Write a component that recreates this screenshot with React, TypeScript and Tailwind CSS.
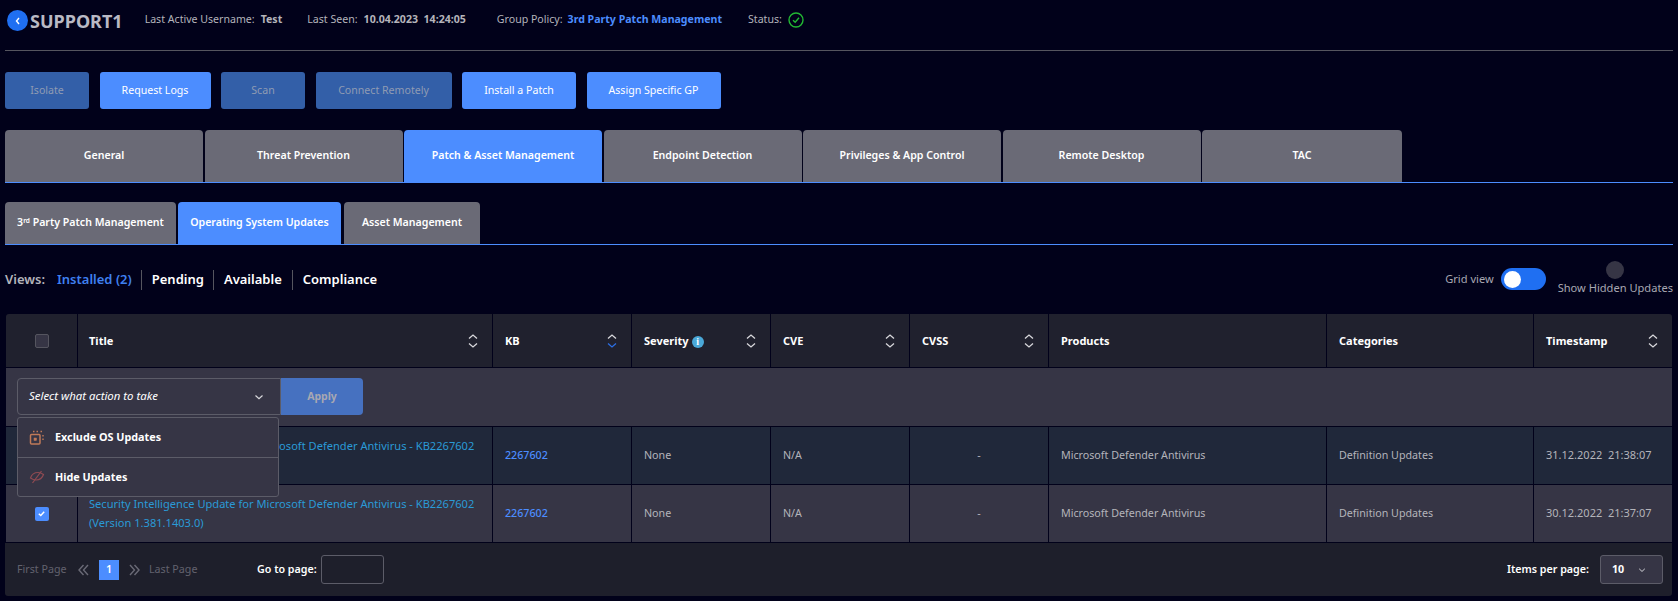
import React from "react";

const tabBase = "flex items-center justify-center rounded-t-[4px] text-white font-semibold";

function Sort({ active = false }: { active?: boolean }) {
  return (
    <svg width="12" height="16" viewBox="0 0 12 16" fill="none" strokeWidth="1.3" className="shrink-0">
      <path d="M2 5.500 6 2l4 3.500" stroke="#d8d8dc" />
      <path d="M2 10.500 6 14l4-3.500" stroke={active ? "#2b6fe6" : "#d8d8dc"} />
    </svg>
  );
}

function Chevron({ size = 10 }: { size?: number }) {
  return (
    <svg width={size} height={size} viewBox="0 0 10 10" fill="none" stroke="#d8d8dc" strokeWidth="1.2">
      <path d="M1.500 3.500 5 6.800l3.500-3.300" />
    </svg>
  );
}

function Head({ label, sort, active, info, title }: { label: string; sort?: boolean; active?: boolean; info?: boolean; title?: boolean }) {
  return (
    <div className={`flex items-center justify-between border-l border-[#01011a] pr-[13px] ${title ? "pl-[11px]" : "pl-[12px]"}`}>
      <span className="flex items-center gap-[3px] pt-[2px] text-[11px] font-bold text-white">
        {label}
        {info && (
          <span className="flex h-[12px] w-[12px] items-center justify-center rounded-full bg-[#4aa8d8] font-['Liberation_Serif',serif] text-[10px] font-bold leading-none text-white">i</span>
        )}
      </span>
      {sort && <Sort active={active} />}
    </div>
  );
}

function Cell({ children, center, title, className = "" }: { children?: React.ReactNode; center?: boolean; title?: boolean; className?: string }) {
  return (
    <div className={`flex items-center border-l border-[#01011a] pr-[12px] text-[10.7px] text-[#b4b4ba] ${title ? "pl-[11px]" : "pl-[12px]"} ${center ? "justify-center" : ""} ${className}`}>
      {children}
    </div>
  );
}

function Row({ date, bg, checked }: { date: string; bg: string; checked?: boolean }) {
  return (
    <div className={`grid h-full grid-cols-[71px_415px_139px_139px_139px_139px_278px_207px_139px] ${bg}`}>
      <div className="flex items-center justify-center">
        {checked ? (
          <span className="flex h-[14px] w-[14px] items-center justify-center rounded-[2px] bg-[#4c8dff]">
            <svg width="9" height="9" viewBox="0 0 10 10" fill="none" stroke="white" strokeWidth="1.6"><path d="M2 5.200 4.200 7.300 8 3" /></svg>
          </span>
        ) : (
          <span className="h-[14px] w-[14px] rounded-[2px] bg-[#4c8dff]" />
        )}
      </div>
      <Cell title><span className="text-[11.1px] leading-[18.5px] text-[#2a9ad6]">Security Intelligence Update for Microsoft Defender Antivirus - KB2267602 (Version 1.381.1403.0)</span></Cell>
      <Cell><span className="font-medium text-[#4c8dff]">2267602</span></Cell>
      <Cell>None</Cell>
      <Cell>N/A</Cell>
      <Cell center>-</Cell>
      <Cell>Microsoft Defender Antivirus</Cell>
      <Cell>Definition Updates</Cell>
      <Cell><span className="whitespace-pre text-[11px]">{date}</span></Cell>
    </div>
  );
}

export default function App() {
  return (
    <div className="h-[601px] w-[1678px] overflow-hidden bg-[#01011a] pl-[5px] pr-[5px] font-['Noto_Sans',sans-serif]">
      {/* Header */}
      <div className="flex h-[51px] items-start border-b border-[#55555f] pt-[10px] text-[10.6px] text-[#b4b4ba]">
        <span className="ml-[2px] flex h-[21px] w-[21px] items-center justify-center rounded-full bg-[#1f6ff2]">
          <svg width="10" height="10" viewBox="0 0 10 10" fill="none" stroke="white" strokeWidth="1.4"><path d="M6 2 3.500 5 6 8" /></svg>
        </span>
        <span className="ml-[2px] text-[18px] font-bold leading-[22px] text-[#b9b9c4]">SUPPORT1</span>
        <div className="ml-[22px] flex h-[20px] items-center">
          <span>Last Active Username:</span>
          <span className="ml-[6px] font-bold">Test</span>
          <span className="ml-[25px]">Last Seen:</span>
          <span className="ml-[6px] whitespace-pre font-bold">10.04.2023  14:24:05</span>
          <span className="ml-[31px]">Group Policy:</span>
          <span className="ml-[5px] font-bold text-[#4c8dff]">3rd Party Patch Management</span>
          <span className="ml-[26px]">Status:</span>
          <svg className="ml-[6px]" width="16" height="16" viewBox="0 0 16 16" fill="none" stroke="#22b833" strokeWidth="1.4"><circle cx="8" cy="8" r="7" /><path d="M5 8.200 7.200 10.300 11 5.800" /></svg>
        </div>
      </div>

      {/* Actions */}
      <div className="mt-[21px] flex gap-[10.5px] text-[10.6px]">
        <button className="h-[37px] w-[84px] rounded-[3px] bg-[#335fa8] text-[#8f9bb3]">Isolate</button>
        <button className="h-[37px] w-[111px] rounded-[3px] bg-[#4c8dff] text-white">Request Logs</button>
        <button className="h-[37px] w-[84px] rounded-[3px] bg-[#335fa8] text-[#8f9bb3]">Scan</button>
        <button className="h-[37px] w-[136px] rounded-[3px] bg-[#335fa8] text-[#8f9bb3]">Connect Remotely</button>
        <button className="h-[37px] w-[114px] rounded-[3px] bg-[#4c8dff] text-white">Install a Patch</button>
        <button className="h-[37px] w-[134px] rounded-[3px] bg-[#4c8dff] text-white">Assign Specific GP</button>
      </div>

      {/* Main tabs */}
      <div className="mt-[21px] flex h-[53px] gap-[1.5px] border-b border-[#4c8dff] text-[10.6px]">
        {["General", "Threat Prevention", "Patch & Asset Management", "Endpoint Detection", "Privileges & App Control", "Remote Desktop"].map((t, i) => (
          <div key={t} className={`${tabBase} w-[198px] ${i === 2 ? "bg-[#4c8dff]" : "bg-[#6a6a76]"}`}>{t}</div>
        ))}
        <div className={`${tabBase} w-[200px] bg-[#6a6a76]`}>TAC</div>
      </div>

      {/* Sub tabs */}
      <div className="mt-[19px] flex h-[43px] gap-[2px] border-b border-[#4c8dff] text-[10.6px]">
        <div className={`${tabBase} w-[171px] bg-[#6a6a76]`}><span>3<sup className="text-[6.5px]">rd</sup> Party Patch Management</span></div>
        <div className={`${tabBase} w-[163px] bg-[#4c8dff]`}>Operating System Updates</div>
        <div className={`${tabBase} ml-[1px] w-[136px] bg-[#6a6a76]`}>Asset Management</div>
      </div>

      {/* Views */}
      <div className="flex h-[69px] items-start justify-between">
        <div className="mt-[24px] flex h-[22px] items-center text-[13px] font-semibold text-white">
          <span className="mr-[12px] text-[#b4b4ba]">Views:</span>
          <span className="border-r border-[#55555f] pr-[9px] text-[#3f80f0]">Installed (2)</span>
          <span className="border-r border-[#55555f] pl-[10px] pr-[9px]">Pending</span>
          <span className="border-r border-[#55555f] px-[10px]">Available</span>
          <span className="pl-[10px]">Compliance</span>
        </div>
        <div className="flex items-start text-[11.1px] text-[#a8a8b2]">
          <span className="mt-[26px]">Grid view</span>
          <span className="ml-[7px] mt-[23px] flex h-[22px] w-[45px] items-center rounded-full bg-[#1f6ff2] pl-[3px]">
            <span className="h-[17px] w-[17px] rounded-full bg-white" />
          </span>
          <div className="ml-[12px] mt-[16px] flex flex-col items-center">
            <span className="h-[18px] w-[18px] rounded-full bg-[#363545]" />
            <span className="leading-[18px]">Show Hidden Updates</span>
          </div>
        </div>
      </div>

      {/* Table */}
      <div className="relative ml-[1px] w-[1666px] rounded-t-[3px]">
        <div className="grid h-[54px] grid-cols-[71px_415px_139px_139px_139px_139px_278px_207px_139px] rounded-t-[3px] border-b border-[#01011a] bg-[#20212e]">
          <div className="flex items-center justify-center">
            <span className="h-[14px] w-[14px] rounded-[2px] border border-[#55555f] bg-[#363545]" />
          </div>
          <Head label="Title" sort title />
          <Head label="KB" sort active />
          <Head label="Severity" sort info />
          <Head label="CVE" sort />
          <Head label="CVSS" sort />
          <Head label="Products" />
          <Head label="Categories" />
          <Head label="Timestamp" sort />
        </div>

        <div className="flex h-[59px] items-center border-b border-[#01011a] bg-[#363545] pb-[1px] pl-[11px]">
          <div className="flex h-[37px] w-[264px] items-center justify-between rounded-l-[4px] border border-[#5c5c68] pl-[11px] pr-[16px] text-[11.400px] italic text-white">
            <span className="pb-[2px]">Select what action to take</span>
            <Chevron />
          </div>
          <button className="h-[37px] w-[82px] rounded-r-[4px] bg-[#4671c0] text-[10.500px] font-bold text-[#a8a8b2]">Apply</button>
        </div>

        <div className="absolute left-[11px] top-[103px] z-10 w-[262px] rounded-[3px] border border-[#5c5c68] bg-[#363545] text-[10.800px] font-bold text-white">
          <div className="flex h-[40px] items-center gap-[10px] border-b border-[#5c5c68] pl-[11px]">
            <svg width="16" height="16" viewBox="0 0 16 16" fill="none" stroke="#c07a58">
              <rect x="1.500" y="4.500" width="9.500" height="9.500" rx="1" strokeWidth="1.500" />
              <rect x="5" y="8" width="2.500" height="2.500" fill="#c07a58" strokeWidth="0.500" />
              <path d="M4 1.500h1.500M7.500 1.500H9M11.500 1.500H13M14 5v1.500M14 8.500V10" strokeWidth="1.400" />
            </svg>
            <span>Exclude OS Updates</span>
          </div>
          <div className="flex h-[38px] items-center gap-[10px] pl-[11px]">
            <svg width="16" height="16" viewBox="0 0 16 16" fill="none" stroke="#8f4a52" strokeWidth="1.200">
              <path d="M1.500 9c1-3 4-5.500 7.500-5.500 1.800 0 3.500.5 5.500 2-1 3-4 5.500-7.500 5.500-1.800 0-3.500-.5-5.500-2Z" />
              <path d="M12.500 2 3.500 14" />
            </svg>
            <span>Hide Updates</span>
          </div>
        </div>

        <div className="h-[58px] border-b border-[#01011a]"><Row date="31.12.2022  21:38:07" bg="bg-[#20283a]" /></div>
        <div className="h-[57px]"><Row date="30.12.2022  21:37:07" bg="bg-[#363545]" checked /></div>
      </div>

      {/* Footer */}
      <div className="flex h-[54px] w-[1667px] items-center justify-between rounded-b-[3px] border-t border-[#01011a] bg-[#1e1f2b] pl-[12px] pr-[9px] text-[10.700px] font-semibold">
        <div className="flex items-center">
          <span className="w-[51px] whitespace-nowrap font-normal text-[#62626e]">First Page</span>
          <svg className="ml-[10px]" width="11" height="12" viewBox="0 0 11 12" fill="none" stroke="#6a6a76" strokeWidth="1.400"><path d="M5.500 1 1 6l4.500 5M10 1 5.500 6l4.500 5" /></svg>
          <span className="ml-[10px] flex h-[20px] w-[20px] items-center justify-center bg-[#4c8dff] text-white">1</span>
          <svg className="ml-[10px]" width="11" height="12" viewBox="0 0 11 12" fill="none" stroke="#6a6a76" strokeWidth="1.400"><path d="M1 1l4.500 5L1 11M5.500 1 10 6l-4.500 5" /></svg>
          <span className="ml-[9px] w-[49px] whitespace-nowrap font-normal text-[#62626e]">Last Page</span>
          <span className="ml-[59px] w-[59px] whitespace-nowrap text-white">Go to page:</span>
          <span className="ml-[5px] h-[29px] w-[63px] rounded-[3px] border border-[#5c5c68]" />
        </div>
        <div className="flex items-center">
          <span className="text-white">Items per page:</span>
          <span className="ml-[11px] flex h-[29px] w-[63px] items-center justify-between rounded-[3px] border border-[#5c5c68] bg-[#363545] pl-[11px] pr-[16px] font-bold text-white">
            10 <Chevron size={8} />
          </span>
        </div>
      </div>
    </div>
  );
}
